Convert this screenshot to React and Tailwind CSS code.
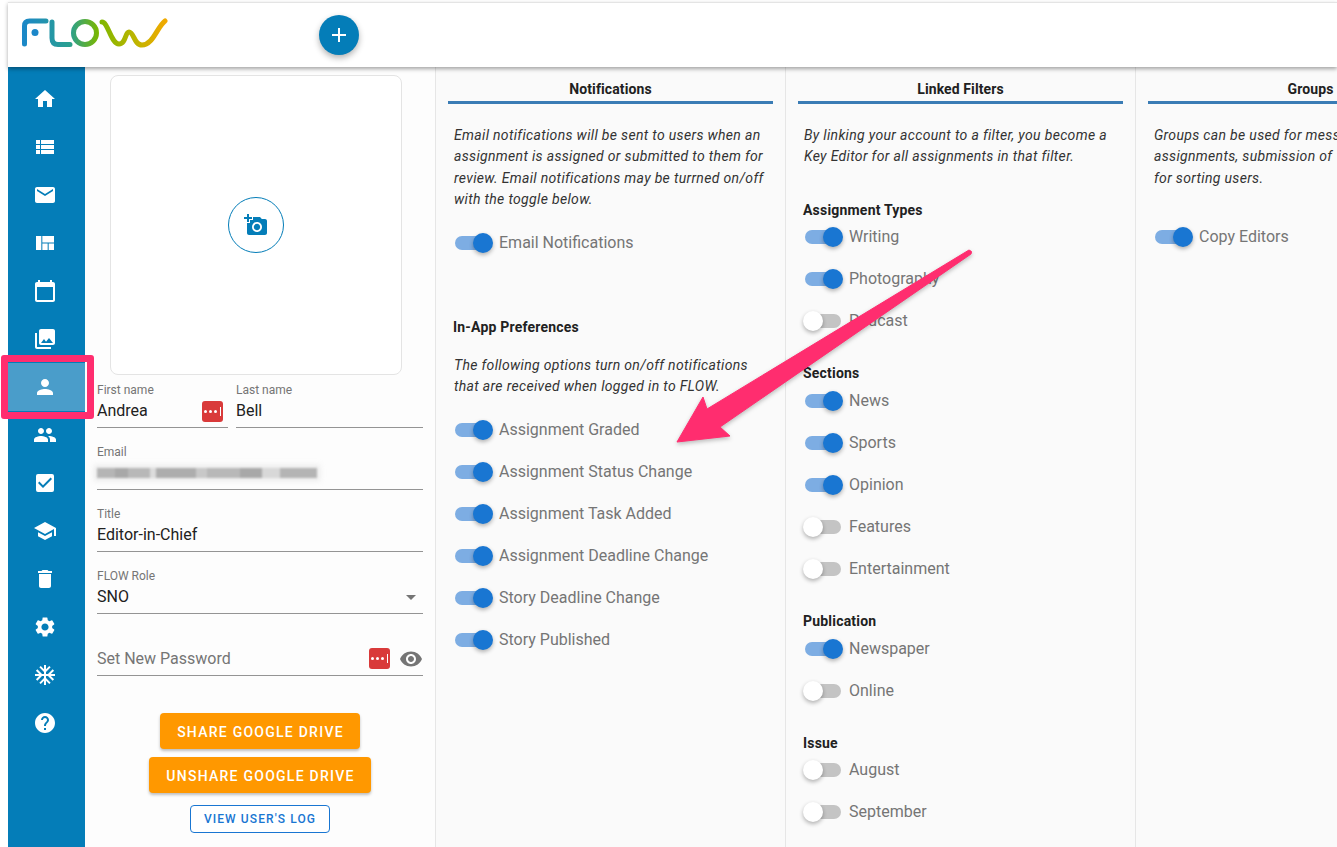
import React from 'react';
import {
  MdHome, MdViewList, MdEmail, MdViewQuilt, MdCalendarToday, MdPhotoLibrary, MdPerson, MdPeople,
  MdCheckBox, MdSchool, MdDelete, MdSettings, MdAcUnit, MdHelp, MdAddAPhoto, MdVisibility, MdAdd,
} from 'react-icons/md';

const navItems = [
  { icon: MdHome },
  { icon: MdViewList },
  { icon: MdEmail },
  { icon: MdViewQuilt },
  { icon: MdCalendarToday },
  { icon: MdPhotoLibrary },
  { icon: MdPerson, active: true },
  { icon: MdPeople },
  { icon: MdCheckBox },
  { icon: MdSchool },
  { icon: MdDelete },
  { icon: MdSettings },
  { icon: MdAcUnit },
  { icon: MdHelp },
];

const Logo = () => (
  <svg width="146" height="30" viewBox="0 0 146 30" fill="none">
    <defs>
      <linearGradient id="flowGrad" gradientUnits="userSpaceOnUse" x1="0" y1="0" x2="146" y2="0">
        <stop offset="0" stopColor="#1b87c9" />
        <stop offset="0.33" stopColor="#2aa08f" />
        <stop offset="0.52" stopColor="#7ab700" />
        <stop offset="0.8" stopColor="#c4b400" />
        <stop offset="1" stopColor="#f5a800" />
      </linearGradient>
    </defs>
    <g stroke="url(#flowGrad)" strokeWidth="5" strokeLinecap="round">
      <path d="M2.5 26V8Q2.5 3 7.5 3H24" />
      <path d="M30 4V20Q30 26.5 36 26.5H48" />
      <ellipse cx="63" cy="15" rx="11.5" ry="11.5" />
      <path d="M80 4C86 4 89 26 97 26C104 26 103 14 107 14C112 14 112 27 120 27C131 27 135 9 143 3" />
    </g>
    <circle cx="13" cy="14.5" r="3.5" fill="#1b87c9" />
  </svg>
);

const LastPass = () => (
  <span className="flex h-[21px] w-[21px] items-center justify-center gap-[2px] rounded-[3px] bg-[#d93a3a]">
    <span className="h-[3px] w-[3px] rounded-full bg-white" />
    <span className="h-[3px] w-[3px] rounded-full bg-white" />
    <span className="h-[3px] w-[3px] rounded-full bg-white" />
    <span className="ml-[1px] h-[9px] w-[1px] bg-white" />
  </span>
);

const Field = ({ label, value, className = '', children }) => (
  <div className={`flex h-[46px] flex-col border-b border-[#949494] ${className}`}>
    <span className="h-[16px] text-xs leading-[16px] text-[#757575]">{label}</span>
    <div className="mt-[1px] flex h-[24px] items-center justify-between text-base text-[#212121]">
      {value}
      {children}
    </div>
  </div>
);

const Toggle = ({ label, on = true }) => (
  <div className="flex h-[42px] items-center pl-[1px]">
    <div className="relative h-[14px] w-[36px] rounded-full" style={{ backgroundColor: on ? '#7dade3' : '#c4c4c4' }}>
      <span
        className={`absolute top-[-3px] h-[20px] w-[20px] rounded-full shadow-[0_2px_4px_rgba(0,0,0,0.3)] ${on ? 'left-[18px] bg-[#1976d2]' : 'left-[-2px] bg-white'}`}
      />
    </div>
    <span className="ml-[8px] text-base text-[#757575]">{label}</span>
  </div>
);

const Heading = ({ children }) => (
  <div className="h-[37px] border-b-[3px] border-[#3a7cb5] pt-[13px] text-center text-sm leading-[18px] font-bold tracking-[0.1px] text-[#212121]">
    {children}
  </div>
);

const Column = ({ title, children }) => (
  <section className="w-[350px] shrink-0 border-r border-[#e6e6e6] px-[12px]">
    <Heading>{title}</Heading>
    <div className="px-[6px]">{children}</div>
  </section>
);

const Note = ({ className = '', children }) => (
  <p className={`text-sm leading-[21.3px] tracking-[0.33px] text-[#333333] italic ${className}`}>{children}</p>
);

const GroupTitle = ({ className = '', children }) => (
  <h3 className={`-ml-[1px] text-sm leading-[18px] font-bold tracking-[0.2px] text-[#212121] ${className}`}>{children}</h3>
);

const Toggles = ({ items, className = '' }) => (
  <div className={className}>
    {items.map(([label, on]) => (
      <Toggle key={label} label={label} on={on} />
    ))}
  </div>
);

export default function App() {
  return (
    <div className="relative flex h-[847px] w-[1337px] flex-col overflow-hidden bg-white font-['Roboto',sans-serif]">
      {/* header */}
      <header className="relative z-10 mt-[2px] ml-[8px] flex h-[65px] shrink-0 items-center border-t border-[#e4e4e4] bg-white shadow-[0_2px_4px_rgba(0,0,0,0.35)]">
        <div className="-mt-[5px] ml-[14px]">
          <Logo />
        </div>
        <button className="ml-[151px] flex h-[40px] w-[40px] items-center justify-center rounded-full bg-[#047db8] text-white shadow-[0_3px_6px_rgba(0,0,0,0.3)]">
          <MdAdd size={24} />
        </button>
      </header>

      <div className="ml-[8px] flex min-h-0 flex-1">
        {/* sidebar */}
        <nav className="w-[77px] shrink-0 bg-[#047db8] pt-[8px]">
          {navItems.map(({ icon: Icon, active }, i) => (
            <div key={i} className={`flex h-[48px] items-center justify-center pr-[3px] text-white ${active ? 'bg-[#4a9dca]' : ''}`}>
              <Icon size={24} />
            </div>
          ))}
        </nav>

        {/* profile */}
        <div className="w-[351px] shrink-0 border-r border-[#e6e6e6] bg-[#fdfdfd] pt-[8px] pr-[12px] pl-[12px]">
          <div className="ml-[13px] flex h-[300px] w-[292px] items-center justify-center rounded-lg border border-[#e4e4e4] bg-white">
            <div className="flex h-[56px] w-[56px] items-center justify-center rounded-full border border-[#047db8] text-[#047db8]">
              <MdAddAPhoto size={24} />
            </div>
          </div>
          <div className="mt-[7px] flex gap-[8px]">
            <Field label="First name" value="Andrea" className="w-[131px]">
              <span className="mr-[5px]"><LastPass /></span>
            </Field>
            <Field label="Last name" value="Bell" className="flex-1" />
          </div>
          <Field label="Email" className="mt-[16px]">
            <div className="h-[10px] w-[220px] bg-[linear-gradient(90deg,#b5b5b5_0_8%,#a8a8a8_8%_14%,#b8b8b8_14%_24%,#dcdcdc_24%_27%,#adadad_27%_45%,#c8c8c8_45%_50%,#b8b8b8_50%_65%,#a8a8a8_65%_75%,#d8d8d8_75%_83%,#b4b4b4_83%_100%)] shadow-[0_0_5px_3px_rgba(215,215,215,0.45)] blur-[1px]" />
          </Field>
          <Field label="Title" value="Editor-in-Chief" className="mt-[16px]" />
          <Field label="FLOW Role" value="SNO" className="mt-[16px]">
            <span className="mr-[7px] h-0 w-0 border-x-[5px] border-t-[5px] border-x-transparent border-t-[#757575]" />
          </Field>
          <div className="mt-[31px] flex h-[31px] items-center justify-between border-b border-[#949494] pb-[3px] text-base text-[#757575]">
            Set New Password
            <div className="flex items-center gap-[9px]">
              <LastPass />
              <MdVisibility size={24} />
            </div>
          </div>
          <div className="mt-[37px] flex flex-col items-center">
            <button className="h-[36px] w-[200px] rounded bg-[#ff9800] pt-[1px] pl-[1px] text-sm font-medium tracking-[1.25px] text-white shadow-[0_2px_3px_rgba(0,0,0,0.25)]">
              SHARE GOOGLE DRIVE
            </button>
            <button className="mt-[8px] h-[36px] w-[222px] rounded bg-[#ff9800] pt-[1px] pl-[1px] text-sm font-medium tracking-[1.25px] text-white shadow-[0_2px_3px_rgba(0,0,0,0.25)]">
              UNSHARE GOOGLE DRIVE
            </button>
            <button className="mt-[12px] h-[28px] w-[140px] rounded border border-[#1976d2] bg-white text-xs font-medium tracking-[1.1px] text-[#1976d2]">
              VIEW USER'S LOG
            </button>
          </div>
        </div>

        {/* settings columns */}
        <div className="flex min-w-0 flex-1 overflow-hidden bg-[#fafafa]">
          <Column title="Notifications">
            <Note className="mt-[21px]">
              Email notifications will be sent to users when an assignment is assigned or submitted to them for review. Email notifications may be turrned on/off with the toggle below.
            </Note>
            <Toggles className="mt-[12px]" items={[['Email Notifications', true]]} />
            <GroupTitle className="mt-[54px]">In-App Preferences</GroupTitle>
            <Note className="mt-[19px]">
              The following options turn on/off notifications that are received when logged in to FLOW.
            </Note>
            <Toggles
              className="mt-[11px]"
              items={[
                ['Assignment Graded', true],
                ['Assignment Status Change', true],
                ['Assignment Task Added', true],
                ['Assignment Deadline Change', true],
                ['Story Deadline Change', true],
                ['Story Published', true],
              ]}
            />
          </Column>
          <Column title="Linked Filters">
            <Note className="mt-[21px]">
              By linking your account to a filter, you become a Key Editor for all assignments in that filter.
            </Note>
            <GroupTitle className="mt-[33px]">Assignment Types</GroupTitle>
            <Toggles className="-mt-[3px]" items={[['Writing', true], ['Photography', true], ['Podcast', false]]} />
            <GroupTitle className="mt-[22px]">Sections</GroupTitle>
            <Toggles className="-mt-[2px]" items={[['News', true], ['Sports', true], ['Opinion', true], ['Features', false], ['Entertainment', false]]} />
            <GroupTitle className="mt-[22px]">Publication</GroupTitle>
            <Toggles className="-mt-[2px]" items={[['Newspaper', true], ['Online', false]]} />
            <GroupTitle className="mt-[22px]">Issue</GroupTitle>
            <Toggles className="-mt-[3px]" items={[['August', false], ['September', false]]} />
          </Column>
          <Column title="Groups">
            <Note className="mt-[21px] whitespace-nowrap">
              Groups can be used for messaging,<br />
              assignments, submission of<br />
              for sorting users.
            </Note>
            <Toggles className="mt-[27px]" items={[['Copy Editors', true]]} />
          </Column>
        </div>
      </div>

      {/* annotation: highlight box and arrow */}
      <div className="absolute top-[355px] left-[1px] z-20 h-[64px] w-[93px] rounded-[3px] border-[7px] border-[#ff2d6f]" />
      <svg className="absolute top-0 left-0 z-20 drop-shadow-[0_2px_2px_rgba(0,0,0,0.25)]" width="1337" height="847" fill="none">
        <path
          d="M969 250L707 409L703 397L677 442L730 436L720 427L971 254Q973 251 969 250Z"
          fill="#ff2d6f"
          stroke="#ff2d6f"
          strokeWidth="1"
          strokeLinejoin="round"
        />
      </svg>
    </div>
  );
}
